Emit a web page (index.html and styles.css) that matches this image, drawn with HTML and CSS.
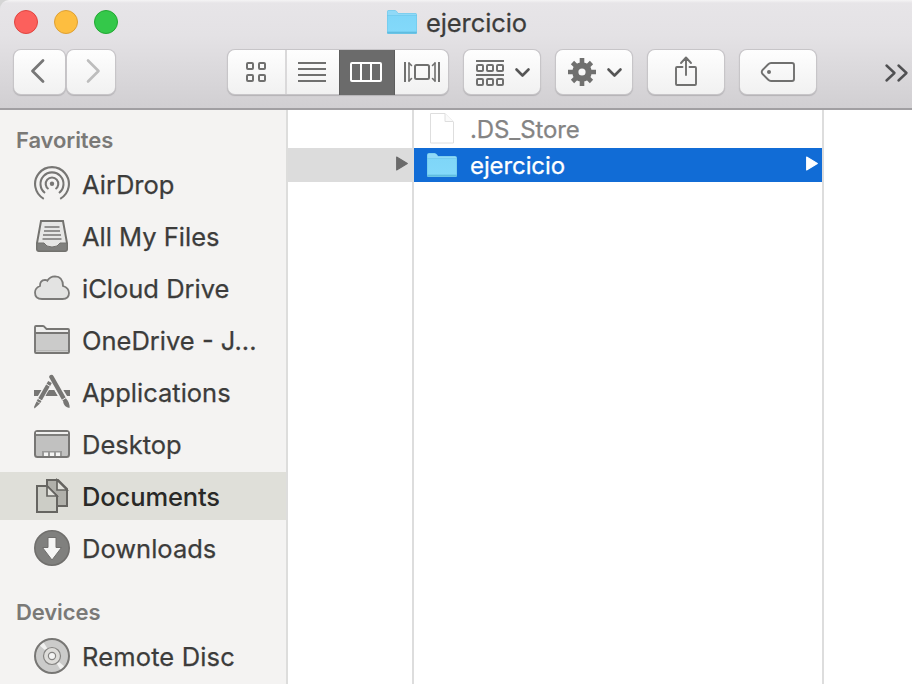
FILE: index.html
```
<!DOCTYPE html>
<html lang="en">
<head>
<meta charset="utf-8">
<title>ejercicio</title>
<link rel="stylesheet" href="styles.css">
</head>
<body>
<svg class="defs" width="0" height="0">
  <defs>
    <linearGradient id="blue" x1="0" y1="0" x2="0" y2="1"><stop offset="0" stop-color="#7fd6f8"/><stop offset="1" stop-color="#83d9fa"/></linearGradient>
    <symbol id="folder" viewBox="0 0 32 28">
      <path d="M1 4Q1 2 3 2H8.500Q10 2 11 3.500L12 5H29Q31 5 31 7V25Q31 26 30 26H2Q1 26 1 25Z" fill="#6bc4e6"/>
      <path d="M1.500 4Q1.500 2.500 3 2.500H8.500Q10 2.500 11 4L12 5.500H29Q30.500 5.500 30.500 7H1.500Z" fill="#90d9f7"/>
      <path d="M1.500 7.500H30.500V24H1.500Z" fill="url(#blue)"/>
      <path d="M1.500 24.200H30.500" stroke="#5ab8de"/>
    </symbol>
  </defs>
</svg>
<div class="window">
  <header class="chrome">
    <div class="titlebar">
      <div class="lights"><i class="light close"></i><i class="light minimize"></i><i class="light expand"></i></div>
      <div class="title"><svg class="folder"><use href="#folder"/></svg><span>ejercicio</span></div>
    </div>
    <div class="toolbar">
      <div class="button back"><svg viewBox="13 50 51 44"><path d="M42 60.500L31.500 71L42 81.500" stroke-width="2.800"/></svg></div>
      <div class="button forward"><svg viewBox="67 50 48 44"><path d="M88 60.500L98.500 71L88 81.500" stroke-width="2.600"/></svg></div>
      <div class="segments">
        <div class="segment grid"><svg viewBox="228 50 57 44"><g stroke-width="2"><rect x="247" y="63" width="6" height="6" rx="1"/><rect x="259" y="63" width="6" height="6" rx="1"/><rect x="247" y="75" width="6" height="6" rx="1"/><rect x="259" y="75" width="6" height="6" rx="1"/></g></svg></div>
        <div class="segment list"><svg viewBox="287 50 52 44"><path d="M298 63H326M298 69H326M298 75H326M298 81H326" stroke-width="2" stroke-linecap="butt"/></svg></div>
        <div class="segment columns-view"><svg viewBox="340 50 54 44"><rect x="351" y="63" width="30" height="18" rx="1" stroke-width="2"/><path d="M361 63V81M371 63V81" stroke-width="2"/></svg></div>
        <div class="segment flow"><svg viewBox="395 50 53 44"><rect x="415" y="65" width="14" height="14" rx="1.500" stroke-width="2"/><path d="M405 62V82M439 62V82" stroke-width="2" stroke-linecap="butt"/><path d="M409 63V81M435 63V81" stroke-width="1.600"/><path d="M409 63L411.500 65.500M409 81L411.500 78.500M435 63L432.500 65.500M435 81L432.500 78.500" stroke-width="1.600"/></svg></div>
      </div>
      <div class="button wide"><svg viewBox="464 50 76 44"><path d="M476 61H504M476 75H504" stroke-width="2" stroke-linecap="butt"/><g stroke-width="2"><rect x="477" y="65" width="6" height="6" rx="1"/><rect x="487" y="65" width="6" height="6" rx="1"/><rect x="497" y="65" width="6" height="6" rx="1"/><rect x="477" y="79" width="6" height="6" rx="1"/><rect x="487" y="79" width="6" height="6" rx="1"/><rect x="497" y="79" width="6" height="6" rx="1"/></g><path class="chevron" d="M516.500 69.500L522.500 75.500L528.500 69.500"/></svg></div>
      <div class="button wide"><svg viewBox="556 50 76 44"><circle cx="582" cy="72" r="6.700" stroke-width="6.200"/><g stroke-width="4.600" stroke-linecap="butt"><path d="M582 58V64M582 80V86M568 72H574M590 72H596"/><path d="M572.500 62.500L577 67M587 77L591.500 81.500M591.500 62.500L587 67M577 77L572.500 81.500"/></g><path class="chevron" d="M608.500 69.500L614.500 75.500L620.500 69.500"/></svg></div>
      <div class="button wide"><svg viewBox="648 50 76 44"><path d="M682.500 67H677Q676 67 676 68V84Q676 85 677 85H695Q696 85 696 84V68Q696 67 695 67H689.500M686 75V58M681 63L686 57.500L691 63" stroke-width="1.900"/></svg></div>
      <div class="button wide"><svg viewBox="740 50 76 44"><path d="M771 63H792Q794 63 794 65V79Q794 81 792 81H771Q769.500 81 768 79.500L762.500 74Q761 72 762.500 70L768 64.500Q769.500 63 771 63Z" stroke-width="1.900"/><circle cx="769" cy="72" r="2" class="solid"/></svg></div>
      <svg class="more" viewBox="884 50 28 44"><path d="M886.500 65.500L894.500 73L886.500 80.500M898.500 65.500L906.500 73L898.500 80.500" stroke-width="2.400"/></svg>
    </div>
  </header>
  <main class="content">
    <aside class="sidebar">
      <h2 class="favorites">Favorites</h2>
      <ul>
        <li><svg viewBox="34 166 36 36"><g class="line" stroke-width="2.100"><path d="M43.800 198.800A16.900 16.900 0 1 1 60.200 198.800"/><path d="M45 193A11.500 11.500 0 1 1 59 193"/><path d="M48.500 189A6.300 6.300 0 1 1 55.500 189"/></g><circle cx="52" cy="183.800" r="2.200" class="dark"/></svg><span>AirDrop</span></li>
        <li><svg viewBox="34 218 36 36"><path d="M41 221H63L67 243V249Q67 251 65 251H39Q37 251 37 249V243Z" fill="#e6e6e5" stroke="#73726f" stroke-width="2"/><path d="M37 243H44Q46 247 52 247T60 243H67V249Q67 251 65 251H39Q37 251 37 249Z" fill="#80807e" stroke="#73726f"/><path d="M44.500 227H59.500M44 231H60M43 235H61M42.500 239H61.500" class="line" stroke-width="1.500"/></svg><span>All My Files</span></li>
        <li><svg viewBox="34 270 36 36"><path d="M42 299Q35 299 35 292.500Q35 288 40 286Q39.800 280 45 279.800Q46.500 279.800 47.300 280.800Q50 276.300 55 276.300Q63 276.500 63 286Q69 288 69 293Q69 299 62.500 299Z" fill="#e3e3e2" stroke="#7b7a78" stroke-width="1.800"/></svg><span>iCloud Drive</span></li>
        <li><svg viewBox="34 322 36 36"><path d="M35 352V327Q35 326 36 326H43Q44 326 45 327.500L46.500 329H68Q69 329 69 330V352Q69 353 68 353H36Q35 353 35 352Z" fill="#eeeeed"/><path d="M35 333H69V353H35Z" fill="#cbcbca"/><path d="M35 352V327Q35 326 36 326H43Q44 326 45 327.500L46.500 329H68Q69 329 69 330V352Q69 353 68 353H36Q35 353 35 352ZM35 333H69" class="line" stroke-width="1.900"/><path d="M36 350.500H68" stroke="#b6b6b5"/></svg><span>OneDrive - J...</span></li>
        <li><svg viewBox="34 374 36 36"><path d="M34 390H70V396H34Z" fill="#777674"/><path d="M52 380L39 402M51.500 378L66 402" stroke="#f4f3f2" stroke-width="8"/><path d="M47 393L49 390H54L57 396H45.500Z" fill="#777674"/><path d="M50 382L38.500 402" stroke="#777674" stroke-width="4.200"/><path d="M51.500 377L64 399" stroke="#777674" stroke-width="4.500" stroke-linecap="round"/><path d="M36.500 401.500L40 403.500L34.500 408.500L34 407ZM63 401.500L66.500 399Q70 403 69.500 408Q64 407 63 401.500Z" fill="#777674"/><path d="M45.500 383.500L51 387M38 398.500L43 401.500M61.500 400.500L67 397" stroke="#f4f3f2" stroke-width="1"/></svg><span>Applications</span></li>
        <li><svg viewBox="34 426 36 36"><rect x="35" y="431" width="34" height="26" rx="2.500" fill="#c1c1c0" stroke="#777674" stroke-width="2"/><path d="M36 432H68V434H36Z" fill="#f0f0ef"/><path d="M36 435H68" class="line" stroke-width="1.800"/><path d="M42 451H62V456H42Z" fill="#999998"/><path d="M44 452.500H48V456H44ZM50 452.500H54V456H50ZM56 452.500H60V456H56Z" fill="#f5f5f4"/></svg><span>Desktop</span></li>
        <li class="selected"><svg viewBox="34 478 36 36"><path d="M47 480H58L67 489V506H47Z" fill="#b0b0aa" stroke="#666561" stroke-width="2"/><path d="M57 480V490H67Z" fill="#e2e2dc" stroke="#666561" stroke-width="1.700"/><path d="M37 486H47L57 496V512H37Z" fill="#cccdc6" stroke="#666561" stroke-width="2"/><path d="M47 486V496H57Z" fill="#e2e2dc" stroke="#666561" stroke-width="1.700"/></svg><span>Documents</span></li>
        <li><svg viewBox="34 530 36 36"><circle cx="52" cy="548" r="17.200" fill="#80807e" stroke="#706f6d" stroke-width="1.600"/><path d="M48 537.500H56V547.500H61.500L52 560L42.500 547.500H48Z" fill="#f5f5f4" stroke="#706f6d"/></svg><span>Downloads</span></li>
      </ul>
      <h2 class="devices">Devices</h2>
      <ul>
        <li><svg viewBox="34 638 36 36"><circle cx="52" cy="656" r="17" fill="#cbcbca"/><path d="M52 656L39 645L43 641.500ZM52 656L65 667L61 670.500Z" fill="#f1f1f0"/><circle cx="52" cy="656" r="17" class="line" stroke-width="2"/><circle cx="52" cy="656" r="8.500" fill="#deddda" stroke="#858482" stroke-width="1.200"/><circle cx="52" cy="656" r="3.600" fill="#f4f4f3" stroke="#858482" stroke-width="1.200"/></svg><span class="disc">Remote Disc</span></li>
      </ul>
    </aside>
    <section class="column parent"><div class="row current"><svg class="arrow" viewBox="0 0 12 14"><path d="M1 1L11 7L1 13Z"/></svg></div></section>
    <section class="column files">
      <div class="row file"><svg class="page" viewBox="0 0 28 34"><path d="M2.500 2.500H17L25.500 11V32H2.500Z" fill="#fff" stroke="#dedede"/><path d="M17 2.500V10.500H25" fill="#fafafa" stroke="#dedede"/></svg><span>.DS_Store</span></div>
      <div class="row active"><svg class="folder"><use href="#folder"/></svg><span>ejercicio</span><svg class="arrow" viewBox="0 0 12 14"><path d="M1 1L11 7L1 13Z"/></svg></div>
    </section>
    <section class="preview"></section>
  </main>
</div>
</body>
</html>
```
FILE: styles.css
```
* { box-sizing: border-box; }
html { background: #d5d5d5; }
body { margin: 0; overflow: hidden; font-family: Inter, "Liberation Sans", sans-serif; color: #3c3c3b; }
.defs { display: block; }
.window { width: 912px; height: 684px; overflow: hidden; display: flex; flex-direction: column; border-top-left-radius: 9px; }

.chrome { height: 110px; flex: none; background: linear-gradient(#f5f4f5 0, #e7e5e8 3px, #e4e2e5 35px, #d1cfd2 108px); border-bottom: 2px solid #a19fa2; }
.titlebar { height: 50px; display: flex; align-items: flex-start; }
.lights { display: flex; gap: 16px; padding: 10px 0 0 14px; width: 386px; }
.light { width: 24px; height: 24px; border-radius: 50%; border: 1px solid; }
.close { background: #fc605c; border-color: #e0443f; }
.minimize { background: #fdbe40; border-color: #dea034; }
.expand { background: #34c84a; border-color: #22a833; }
.title { display: flex; align-items: center; height: 44px; font-size: 25.500px; -webkit-text-stroke: 0.250px; }
.folder { width: 32px; height: 28px; flex: none; }
.title span { margin-left: 8px; letter-spacing: -0.100px; }

.toolbar { display: flex; height: 46px; }
.toolbar svg { display: block; width: 100%; height: 44px; fill: none; stroke: #70706f; stroke-linecap: round; stroke-linejoin: round; }
.button, .segments { height: 44px; border-radius: 7px; background: linear-gradient(#fefefe, #f1f1f1); box-shadow: 0 0 0 1px #c7c5c8, 0 1px 1px 1px #b4b2b5; }
.back { width: 51px; margin-left: 14px; }
.toolbar .back svg { stroke: #777; }
.forward { width: 48px; margin-left: 2px; }
.toolbar .forward svg { stroke: #bdbdbd; }
.segments { display: flex; width: 220px; margin-left: 113px; }
.grid { width: 59px; border-right: 2px solid #dad9da; }
.list { width: 52px; }
.columns-view { width: 56px; height: 45px; background: #6b6b6b; border-left: 1px solid #5d5d5d; border-right: 1px solid #5d5d5d; }
.toolbar .columns-view svg { stroke: #fff; }
.flow { width: 53px; }
.wide { width: 76px; margin-left: 16px; }
.toolbar .chevron { stroke: #555; stroke-width: 2.600px; }
.toolbar .solid { fill: #70706f; stroke: none; }
.toolbar .more { width: 28px; margin-left: 68px; stroke: #505052; }

.content { display: flex; flex: 1; min-height: 0; background: #fff; }
.sidebar { width: 288px; border-right: 2px solid #dddddc; background: #f4f3f2; }
.sidebar h2 { margin: 0; padding-left: 16px; font-size: 22px; line-height: 30px; font-weight: 600; letter-spacing: -0.100px; color: #7a7977; }
.sidebar .favorites { margin: 15px 0 5px; }
.sidebar .devices { margin: 25px 0 5px; }
.sidebar ul { margin: 0; padding: 0; list-style: none; display: flex; flex-direction: column; gap: 4px; }
.sidebar li { height: 48px; display: flex; align-items: center; padding-left: 34px; font-size: 25.500px; white-space: nowrap; -webkit-text-stroke: 0.250px; }
.sidebar li svg { width: 36px; height: 36px; flex: none; margin-right: 12px; }
.sidebar .disc { letter-spacing: 0.150px; }
.sidebar .selected { background: #dfdfd9; color: #292927; font-weight: 500; letter-spacing: -0.120px; -webkit-text-stroke: 0; }
.line { fill: none; stroke: #777674; }
.dark { fill: #777674; }

.column { border-right: 2px solid #dddddd; }
.parent { width: 126px; padding-top: 38px; }
.files { width: 410px; }
.row { height: 34px; display: flex; align-items: center; font-size: 24px; letter-spacing: -0.100px; -webkit-text-stroke: 0.250px; }
.arrow { width: 14px; height: 15px; margin-left: auto; margin-top: -3px; stroke-linejoin: round; stroke-width: 1; }
.current { background: #dcdcdc; padding-right: 3px; }
.current .arrow { fill: #6b6b6b; stroke: #6b6b6b; }
.file { height: 38px; color: #848484; padding-left: 14px; }
.page { width: 28px; height: 34px; margin: -3px 14px 0 0; }
.active { background: #116cd6; color: #fff; padding: 0 3px 0 12px; }
.active .folder { margin-right: 12px; }
.active .arrow { fill: #fff; stroke: #fff; }
```
